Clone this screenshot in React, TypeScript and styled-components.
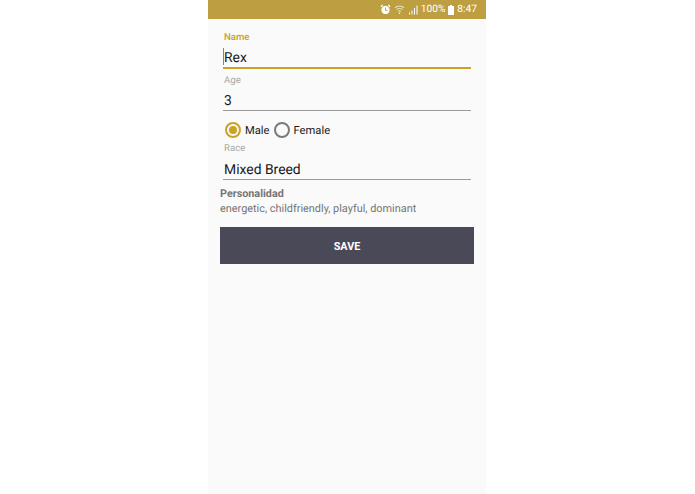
import React from 'react';
import styled, { createGlobalStyle } from 'styled-components';

const GOLD = '#c9a227';

const GlobalStyle = createGlobalStyle`
  html, body {
    margin: 0;
    height: 100%;
    background: #fff;
    font-family: Roboto, "Liberation Sans", sans-serif;
    text-rendering: geometricPrecision;
  }
  #root {
    height: 100%;
  }
`;

const Page = styled.div`
  display: flex;
  justify-content: flex-start;
  padding-left: 208px;
  height: 494px;
  overflow: hidden;
`;
const Phone = styled.div`
  width: 278px;
  background: #fafafa;
  display: flex;
  flex-direction: column;
`;
const StatusBar = styled.div`
  height: 19px;
  background: #bd9f42;
  display: flex;
  align-items: center;
  justify-content: flex-end;
  padding-right: 9px;
  color: #fff;
  font-size: 10.2px;
`;
const StatusIcon = styled.svg`
  display: block;
  margin-right: 3px;
`;
const Percent = styled.span`
  margin: 0 3px 0 0;
`;
const Form = styled.form`
  display: flex;
  flex-direction: column;
  padding: 12px 12px 0;
`;
const Field = styled.div`
  display: flex;
  flex-direction: column;
  padding: 0 3px;
`;
const FieldLabel = styled.label<{ $active?: boolean }>`
  font-size: 9.6px;
  line-height: 12px;
  padding: 1px 0 0 1px;
  margin-bottom: -1px;
  color: ${(p) => (p.$active ? GOLD : '#a8a8a8')};
  font-weight: ${(p) => (p.$active ? 500 : 400)};
`;
const InputRow = styled.div<{ $active?: boolean; $tall?: boolean }>`
  position: relative;
  height: ${(p) => (p.$active || p.$tall ? '24px' : '23px')};
  padding: 4px 0 0 1px;
  margin-top: 2px;
  margin-bottom: ${(p) => (p.$tall ? '4px' : '5px')};
  display: flex;
  align-items: center;
  font-size: 13.9px;
  color: #1a1a1a;
  border-bottom: ${(p) => (p.$active ? `2px solid ${GOLD}` : '1px solid #9a9a9a')};
  box-sizing: border-box;
`;
const Caret = styled.span`
  position: absolute;
  left: 0;
  top: 3px;
  width: 1px;
  height: 17px;
  background: #a8861c;
`;
const RadioRow = styled.div`
  display: flex;
  align-items: center;
  height: 24px;
  padding-left: 5px;
  margin-top: 2px;
  font-size: 11.2px;
  color: #1a1a1a;
`;
const RadioCircle = styled.span<{ $checked?: boolean }>`
  width: 16px;
  height: 16px;
  border-radius: 50%;
  box-sizing: border-box;
  border: 2px solid ${(p) => (p.$checked ? GOLD : '#7a7a7a')};
  display: flex;
  align-items: center;
  justify-content: center;
  margin-right: 4px;
  &::after {
    content: '';
    display: ${(p) => (p.$checked ? 'block' : 'none')};
    width: 8px;
    height: 8px;
    border-radius: 50%;
    background: ${GOLD};
  }
`;
const RadioText = styled.span`
  margin-right: 4px;
`;
const Personality = styled.div`
  margin-top: 3px;
  font-size: 10.9px;
  line-height: 15px;
  color: #757575;
`;
const PersonalityTitle = styled.div`
  font-size: 10.8px;
  font-weight: 700;
  line-height: 14px;
`;
const SaveButton = styled.button`
  margin-top: 11px;
  height: 37px;
  width: 254px;
  border: 0;
  padding: 1px 0 0;
  background: #4a4958;
  color: #fff;
  font-family: inherit;
  font-size: 10.8px;
  font-weight: 700;
`;

const App: React.FC = () => (
  <Page>
    <GlobalStyle />
    <Phone>
      <StatusBar>
        <StatusIcon width="11" height="11" viewBox="0 0 12 12">
          <circle cx="6" cy="6.5" r="4.5" fill="#fff" />
          <path d="M1 3l2-2M11 3L9 1" stroke="#fff" strokeWidth="1.4" />
          <path d="M6 4v3h2" stroke="#bd9f42" strokeWidth="1" fill="none" />
        </StatusIcon>
        <StatusIcon width="11" height="11" viewBox="0 0 12 12">
          <path d="M1 4.2a7 7 0 0 1 10 0M2.8 6.2a4.6 4.6 0 0 1 6.4 0M4.5 8a2.2 2.2 0 0 1 3 0" stroke="#ece3c4" strokeWidth="1.1" fill="none" />
          <path d="M6 9v2" stroke="#ece3c4" strokeWidth="1.4" />
        </StatusIcon>
        <StatusIcon width="10" height="10" viewBox="0 0 10 10">
          <path d="M1 7.5h1v2H1zM3.5 5.5h1v4h-1zM6 3h1v6.5H6zM8.5 .5h1v9h-1z" fill="#fff" />
        </StatusIcon>
        <Percent>100%</Percent>
        <StatusIcon width="6" height="10" viewBox="0 0 6 10">
          <path d="M2 0h2v1h2v9H0V1h2z" fill="#fff" />
        </StatusIcon>
        <span>8:47</span>
      </StatusBar>
      <Form>
        <Field>
          <FieldLabel $active>Name</FieldLabel>
          <InputRow $active>
            <Caret />
            Rex
          </InputRow>
        </Field>
        <Field>
          <FieldLabel>Age</FieldLabel>
          <InputRow>3</InputRow>
        </Field>
        <RadioRow>
          <RadioCircle $checked />
          <RadioText>Male</RadioText>
          <RadioCircle />
          <RadioText>Female</RadioText>
        </RadioRow>
        <Field>
          <FieldLabel>Race</FieldLabel>
          <InputRow $tall>Mixed Breed</InputRow>
        </Field>
        <Personality>
          <PersonalityTitle>Personalidad</PersonalityTitle>
          energetic, childfriendly, playful, dominant
        </Personality>
        <SaveButton type="button">SAVE</SaveButton>
      </Form>
    </Phone>
  </Page>
);

export default App;
